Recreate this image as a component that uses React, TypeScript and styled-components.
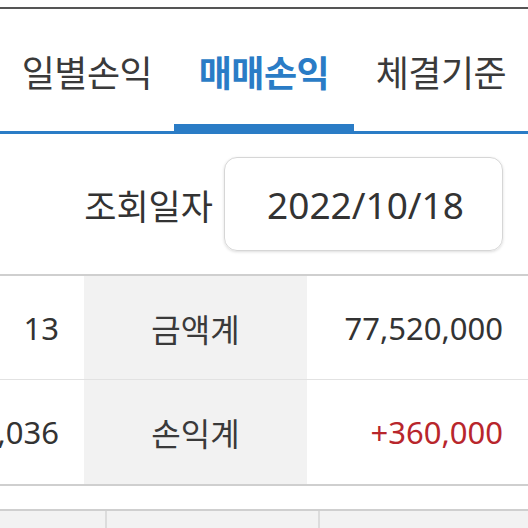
import React from 'react';
import styled, { createGlobalStyle } from 'styled-components';

const GlobalStyle = createGlobalStyle`
  html, body {
    margin: 0;
    padding: 0;
    background: #fff;
  }
  body {
    font-family: "Noto Sans", "Noto Sans CJK KR", sans-serif;
    color: #333;
    overflow: hidden;
  }
`;

const Page = styled.div`
  width: 528px;
  height: 528px;
  overflow: hidden;
  display: flex;
  flex-direction: column;
`;

const TopRule = styled.div`
  height: 7px;
  border-bottom: 2px solid #555;
  flex-shrink: 0;
`;

const TabBar = styled.div`
  display: grid;
  grid-template-columns: 174px 180px 174px;
  height: 122px;
  border-bottom: 3px solid #2a7cc6;
  flex-shrink: 0;
`;

const Tab = styled.div<{ $active?: boolean }>`
  display: flex;
  align-items: center;
  justify-content: center;
  padding-top: 8px;
  font-family: "Noto Sans CJK KR", sans-serif;
  font-size: 36px;
  font-weight: ${p => (p.$active ? 700 : 400)};
  color: ${p => (p.$active ? '#2a7cc6' : '#3a3a3a')};
  border-bottom: 7px solid ${p => (p.$active ? '#2a7cc6' : 'transparent')};
  letter-spacing: -0.5px;
  white-space: nowrap;
`;

const DateRow = styled.div`
  height: 140px;
  display: flex;
  align-items: center;
  justify-content: flex-end;
  gap: 11px;
  padding-right: 25px;
  flex-shrink: 0;
`;

const DateLabel = styled.span`
  font-family: "Noto Sans CJK KR", sans-serif;
  font-size: 35px;
  color: #333;
`;

const DateBox = styled.div`
  width: 279px;
  height: 94px;
  box-sizing: border-box;
  border: 1px solid #d6d6d6;
  border-radius: 13px;
  box-shadow: 0 1px 3px rgba(0, 0, 0, 0.14);
  display: flex;
  align-items: center;
  justify-content: center;
  font-size: 37px;
  color: #333;
  padding-left: 4px;
`;

const SummaryTable = styled.div`
  border-top: 2px solid #cfcfcf;
  border-bottom: 2px solid #cfcfcf;
  flex-shrink: 0;
`;

const SummaryRow = styled.div<{ $last?: boolean }>`
  display: grid;
  grid-template-columns: 84px 223px 1fr;
  height: ${p => (p.$last ? 104 : 103)}px;
  border-bottom: ${p => (p.$last ? 'none' : '1px solid #e2e2e2')};
`;

const ValueCell = styled.div<{ $tone?: 'plus' }>`
  display: flex;
  align-items: center;
  justify-content: flex-end;
  padding-right: 25px;
  font-size: 31px;
  color: ${p => (p.$tone === 'plus' ? '#b8262c' : '#333')};
  white-space: nowrap;
  overflow: hidden;
`;

const LabelCell = styled.div`
  display: flex;
  align-items: center;
  justify-content: center;
  background: #f2f2f2;
  font-family: "Noto Sans CJK KR", sans-serif;
  font-size: 32px;
  color: #3a3a3a;
`;

const Spacer = styled.div`
  height: 23px;
  flex-shrink: 0;
`;

const ListHeader = styled.div`
  flex: 1;
  display: grid;
  grid-template-columns: 105px 213px 1fr;
  border-top: 2px solid #cfcfcf;
  background: #f2f2f2;
`;

const HeaderCell = styled.div`
  border-left: 2px solid #dcdcdc;
  &:first-child {
    border-left: none;
  }
`;

const rows = [
  { left: '13', label: '금액계', value: '77,520,000' },
  { left: '1,036', label: '손익계', value: '+360,000', tone: 'plus' as const },
];

export default function App() {
  return (
    <Page>
      <GlobalStyle />
      <TopRule />
      <TabBar>
        <Tab>일별손익</Tab>
        <Tab $active>매매손익</Tab>
        <Tab>체결기준</Tab>
      </TabBar>
      <DateRow>
        <DateLabel>조회일자</DateLabel>
        <DateBox>2022/10/18</DateBox>
      </DateRow>
      <SummaryTable>
        {rows.map((r, i) => (
          <SummaryRow key={r.label} $last={i === rows.length - 1}>
            <ValueCell>{r.left}</ValueCell>
            <LabelCell>{r.label}</LabelCell>
            <ValueCell $tone={r.tone}>{r.value}</ValueCell>
          </SummaryRow>
        ))}
      </SummaryTable>
      <Spacer />
      <ListHeader>
        <HeaderCell />
        <HeaderCell />
        <HeaderCell />
      </ListHeader>
    </Page>
  );
}
